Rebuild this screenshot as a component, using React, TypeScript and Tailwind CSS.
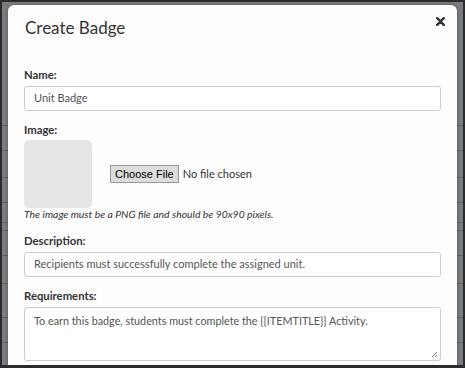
import React from "react";

const rows = [
  { top: 125, c: "#5f6267" },
  { top: 150, c: "#5f6267" },
  { top: 177, c: "#5f6267" },
  { top: 202, c: "#5f6267" },
  { top: 222, c: "#6a6d72" },
  { top: 230, c: "#5f6267" },
  { top: 255, c: "#5f6267" },
  { top: 283, c: "#8a5a3a" },
  { top: 317, c: "#5f6267" },
  { top: 342, c: "#5f6267" },
];

function Label({ children }: { children: React.ReactNode }) {
  return <div className="text-[11.3px] font-bold text-[#333] leading-[14px] mb-[4px]">{children}</div>;
}

export default function App() {
  return (
    <div
      className="relative w-[465px] h-[368px] overflow-hidden bg-[#2b2b2b]"
      style={{ fontFamily: "Lato, 'Open Sans', sans-serif" }}
    >
      <div className="absolute left-[2px] top-[2px] right-[2px] bottom-[3px] bg-[#7a7d82]">
        {rows.map((r, i) => (
          <div
            key={i}
            className="absolute left-0 right-0 h-px"
            style={{ top: r.top - 2, background: r.c }}
          />
        ))}
      </div>
      <div className="absolute left-[8px] top-[5px] w-[449px] h-[370px] bg-[#fdfdfd] rounded-[6px] shadow-[0_0_4px_rgba(0,0,0,0.3)] px-[16px]">
        <div className="flex items-start justify-between pt-[12px]">
          <div className="text-[17px] text-[#333] leading-[22px] ml-[1px]">Create Badge</div>
          <svg className="mr-[-4px] mt-[0px]" width="9" height="9" viewBox="0 0 9 9">
            <path d="M1.2 1.2 L7.8 7.8 M7.8 1.2 L1.2 7.8" stroke="#333" strokeWidth="2.4" strokeLinecap="round" />
          </svg>
        </div>
        <div className="mt-[29px]">
          <Label>Name:</Label>
          <div className="h-[25px] border border-[#ccc] rounded-[3px] bg-white flex items-center px-[9px] text-[11px] text-[#555]">
            Unit Badge
          </div>
        </div>
        <div className="mt-[12px]">
          <Label>Image:</Label>
          <div className="flex items-center mt-[-1px]">
            <div className="w-[68px] h-[68px] rounded-[5px] bg-[#e6e6e6]" />
            <div className="ml-[18px] flex items-center">
              <div
                className="h-[18px] px-[4px] bg-[#dcdcdc] border border-[#9a9a9a] flex items-center text-[11px] text-black"
                style={{ fontFamily: "'Liberation Sans', Arial, sans-serif" }}
              >
                Choose File
              </div>
              <span className="ml-[4px] text-[11px] text-[#333]">No file chosen</span>
            </div>
          </div>
          <div className="text-[10.4px] italic text-[#333] leading-[13px]">
            The image must be a PNG file and should be 90x90 pixels.
          </div>
        </div>
        <div className="mt-[13px]">
          <Label>Description:</Label>
          <div className="h-[25px] border border-[#ccc] rounded-[3px] bg-white flex items-center px-[9px] text-[11px] text-[#555]">
            Recipients must successfully complete the assigned unit.
          </div>
        </div>
        <div className="mt-[12px]">
          <Label>Requirements:</Label>
          <div className="relative h-[54px] border border-[#ccc] rounded-[3px] bg-white px-[9px] pt-[6px] text-[10.8px] text-[#555] leading-[14px]">
            To earn this badge, students must complete the {"{{ITEMTITLE}}"} Activity.
            <svg className="absolute right-[2px] bottom-[2px]" width="7" height="7" viewBox="0 0 7 7">
              <path d="M1 6 L6 1 M4 6 L6 4" stroke="#777" strokeWidth="1" />
            </svg>
          </div>
        </div>
      </div>
      <div className="absolute left-0 right-0 bottom-0 h-[3px] bg-[#2b2b2b]" />
    </div>
  );
}
